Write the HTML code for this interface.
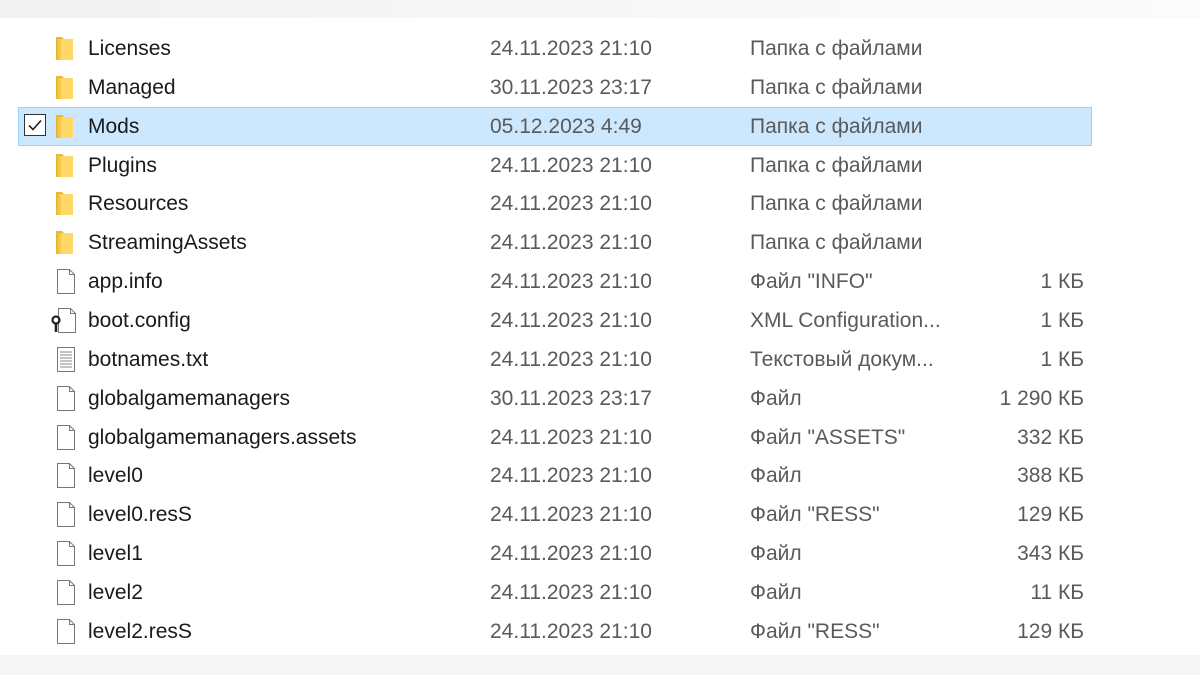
<!DOCTYPE html>
<html><head><meta charset="utf-8"><style>
body{margin:0;width:1200px;height:675px;background:#fff;position:relative;overflow:hidden;font-family:"Liberation Sans","DejaVu Sans",sans-serif;font-size:21px}
.top{position:absolute;left:0;top:0;width:1200px;height:18px;background:linear-gradient(90deg,#f2f2f2,#f8f8f8 60%,#fbfbfb)}
.bot{position:absolute;left:0;top:655px;width:1200px;height:20px;background:#f6f6f6}
.row{position:absolute;left:0;width:1200px;height:38px;line-height:40px}
.sel{position:absolute;left:18px;top:107px;width:1072px;height:37px;background:#cce8ff;border:1px solid #99d1ff}
.n{position:absolute;left:88px;color:#1a1a1a}
.d{position:absolute;left:490px;color:#5a5a5a}
.t{position:absolute;left:750px;color:#5a5a5a}
.s{position:absolute;right:116px;color:#5a5a5a}
.ic{position:absolute;left:54px;top:6px;display:block}
.cb{position:absolute;left:24px;top:7px;width:22px;height:22px;border:1px solid #333;box-sizing:border-box;background:#fff}
.cb svg{display:block;position:absolute;left:1px;top:1px}
</style></head><body>
<div class="top"></div><div class="bot"></div>
<div class="sel"></div>
<svg width="0" height="0" style="position:absolute"><defs>
<g id="fold"><path d="M2 2h6l2 2v21H2z" fill="#e8b830"/><path d="M4 4h15v21H4z" fill="#ffd968"/><path d="M4 4h3v21H4z" fill="#f7c94a"/></g>
<g id="file"><path d="M3.5 1.5h12l5 5v19h-17z" fill="#fff" stroke="#777"/><path d="M15.5 1.5v5h5" fill="none" stroke="#777"/></g>
<g id="txt"><path d="M3.5 1.5h17v24h-17z" fill="#fff" stroke="#777"/><path d="M6 6h12M6 9h12M6 12h12M6 15h12M6 18h12M6 21h12" stroke="#888"/></g>
<g id="cfg"><path d="M8.5 1.5h12l5 5v19h-17z" fill="#fff" stroke="#777"/><path d="M20.5 1.5v5h5" fill="none" stroke="#777"/><circle cx="6" cy="13" r="3.5" fill="none" stroke="#222" stroke-width="2.2"/><path d="M6 16v9" stroke="#222" stroke-width="2.6"/></g>
</defs></svg>
<div id="rows"></div>
<script>
var R=[["Licenses","24.11.2023 21:10","Папка с файлами","","fold"],
["Managed","30.11.2023 23:17","Папка с файлами","","fold"],
["Mods","05.12.2023 4:49","Папка с файлами","","fold"],
["Plugins","24.11.2023 21:10","Папка с файлами","","fold"],
["Resources","24.11.2023 21:10","Папка с файлами","","fold"],
["StreamingAssets","24.11.2023 21:10","Папка с файлами","","fold"],
["app.info","24.11.2023 21:10","Файл \"INFO\"","1 КБ","file"],
["boot.config","24.11.2023 21:10","XML Configuration...","1 КБ","cfg"],
["botnames.txt","24.11.2023 21:10","Текстовый докум...","1 КБ","txt"],
["globalgamemanagers","30.11.2023 23:17","Файл","1 290 КБ","file"],
["globalgamemanagers.assets","24.11.2023 21:10","Файл \"ASSETS\"","332 КБ","file"],
["level0","24.11.2023 21:10","Файл","388 КБ","file"],
["level0.resS","24.11.2023 21:10","Файл \"RESS\"","129 КБ","file"],
["level1","24.11.2023 21:10","Файл","343 КБ","file"],
["level2","24.11.2023 21:10","Файл","11 КБ","file"],
["level2.resS","24.11.2023 21:10","Файл \"RESS\"","129 КБ","file"]];
var h="";R.forEach(function(r,i){var y=29+i*38.85;
var ic=r[4]=="cfg"?'<svg class="ic" style="left:50px" width="28" height="28"><use href="#cfg"/></svg>':'<svg class="ic" width="26" height="28"><use href="#'+r[4]+'"/></svg>';
h+='<div class="row" style="top:'+y+'px">'+(i==2?'<div class="cb"><svg width="18" height="18"><path d="M3 9.5l4 4 8-9" fill="none" stroke="#222" stroke-width="1.6"/></svg></div>':'')+ic+'<span class="n">'+r[0]+'</span><span class="d">'+r[1]+'</span><span class="t">'+r[2]+'</span><span class="s">'+r[3]+'</span></div>';});
document.getElementById("rows").innerHTML=h;
</script>
</body></html>
